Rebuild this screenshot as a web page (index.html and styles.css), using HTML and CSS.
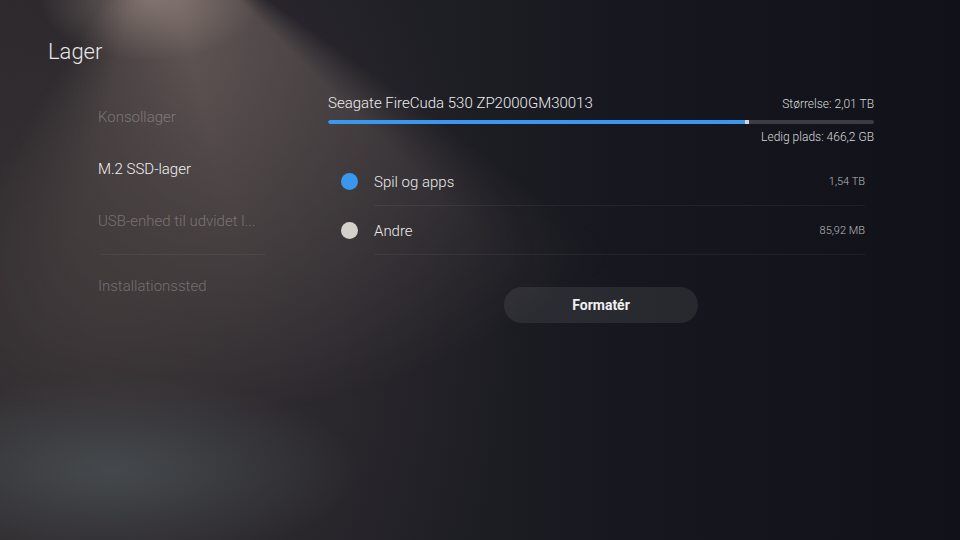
FILE: index.html
```html
<!DOCTYPE html>
<html>
<head>
<meta charset="utf-8">
<title>Lager</title>
<link rel="stylesheet" href="styles.css">
</head>
<body>
<div class="screen">
	<h1 class="title">Lager</h1>
	<div class="layout">
		<nav class="menu">
			<div class="menu-item dim">Konsollager</div>
			<div class="menu-item active">M.2 SSD-lager</div>
			<div class="menu-item dim">USB-enhed til udvidet l...</div>
			<div class="menu-sep"></div>
			<div class="menu-item dim">Installationssted</div>
		</nav>
		<main class="panel">
			<div class="drive-head">
				<span class="drive-name">Seagate FireCuda 530 ZP2000GM30013</span>
				<span class="drive-size">Størrelse: 2,01 TB</span>
			</div>
			<div class="bar">
				<div class="bar-fill" style="width: 76.4%"></div>
				<div class="bar-other"></div>
			</div>
			<div class="free">Ledig plads: 466,2 GB</div>
			<ul class="usage">
				<li class="usage-row">
					<span class="dot blue"></span>
					<span class="usage-label">Spil og apps</span>
					<span class="usage-value">1,54 TB</span>
				</li>
				<li class="usage-row">
					<span class="dot grey"></span>
					<span class="usage-label">Andre</span>
					<span class="usage-value">85,92 MB</span>
				</li>
			</ul>
			<div class="actions">
				<button class="btn">Formatér</button>
			</div>
		</main>
	</div>
</div>
</body>
</html>
```

FILE: styles.css
```css
html, body {
	margin: 0;
	padding: 0;
}
body {
	width: 960px;
	height: 540px;
	overflow: hidden;
	font-family: Roboto, "Noto Sans", sans-serif;
	color: #fff;
	background: #15161e;
}
.screen {
	position: relative;
	width: 960px;
	height: 540px;
	box-sizing: border-box;
	padding: 38px 0 0 48px;
	background:
		radial-gradient(ellipse 110px 60px at 150px 0px, rgba(200,178,165,0.45), rgba(200,178,165,0) 100%),
		radial-gradient(ellipse 250px 95px at 110px 470px, rgba(78,88,92,0.65), rgba(78,88,92,0) 100%),
		radial-gradient(ellipse 420px 480px at 100px 320px, rgba(58,52,54,0.85), rgba(58,52,54,0) 100%),
		linear-gradient(90deg, #29262a 0%, #222128 35%, #17181f 65%, #111219 100%);
}
/* light beam from the top left */
.screen::before {
	content: "";
	position: absolute;
	left: 0;
	top: 0;
	right: 0;
	bottom: 0;
	background: conic-gradient(from 125deg at 155px -80px,
		rgba(152,134,126,0) 0deg,
		rgba(152,134,126,0.45) 9deg,
		rgba(152,134,126,0.56) 40deg,
		rgba(152,134,126,0.34) 70deg,
		rgba(152,134,126,0) 88deg);
	-webkit-mask-image: radial-gradient(ellipse 640px 500px at 155px -80px, #000 12%, rgba(0,0,0,0.5) 55%, transparent 100%);
	mask-image: radial-gradient(ellipse 640px 500px at 155px -80px, #000 12%, rgba(0,0,0,0.5) 55%, transparent 100%);
	pointer-events: none;
}
.title, .layout {
	position: relative;
}
.title {
	margin: 0;
	font-weight: 300;
	font-size: 22px;
	line-height: 28px;
	color: #e8e6e6;
}
.layout {
	display: flex;
	margin-top: 25px;
}
.menu {
	width: 218px;
	padding-left: 50px;
	box-sizing: content-box;
}
.menu-item {
	font-size: 15px;
	font-weight: 300;
	height: 52px;
	line-height: 52px;
	white-space: nowrap;
}
.menu-item.dim {
	color: rgba(255,255,255,0.28);
}
.menu-item.active {
	color: #f2f2f2;
}
.menu-sep {
	height: 1px;
	width: 166px;
	margin: 7px 0 5px 2px;
	background: rgba(255,255,255,0.05);
}
.panel {
	width: 546px;
	margin-left: 12px;
	margin-top: 3px;
}
.drive-head {
	display: flex;
	justify-content: space-between;
	align-items: baseline;
}
.drive-name {
	font-size: 15px;
	font-weight: 300;
	color: #eeeeee;
}
.drive-size {
	font-size: 12px;
	font-weight: 300;
	color: #d8d8d8;
}
.bar {
	display: flex;
	height: 4px;
	margin-top: 8px;
	border-radius: 2px;
	background: #3b3c44;
	overflow: hidden;
}
.bar-fill {
	background: #3a97ee;
	border-radius: 2px 0 0 2px;
}
.bar-other {
	width: 4px;
	background: #d6d4d0;
}
.free {
	text-align: right;
	font-size: 12px;
	font-weight: 300;
	color: #d8d8d8;
	margin-top: 6px;
}
.usage {
	list-style: none;
	margin: 13px 9px 0 0;
	padding: 0;
}
.usage-row {
	display: flex;
	align-items: center;
	height: 49px;
	position: relative;
}
.usage-row::after {
	content: "";
	position: absolute;
	left: 46px;
	right: 0;
	bottom: 0;
	height: 1px;
	background: rgba(255,255,255,0.06);
}
.dot {
	width: 17px;
	height: 17px;
	border-radius: 50%;
	margin-left: 13px;
	margin-right: 16px;
}
.dot.blue {
	background: #3a97ee;
}
.dot.grey {
	background: #d4d1cc;
}
.usage-label {
	flex: 1;
	font-size: 15px;
	font-weight: 300;
	color: #eaeaea;
}
.usage-value {
	font-size: 11px;
	font-weight: 300;
	color: #b8b8b8;
}
.actions {
	display: flex;
	justify-content: center;
	margin-top: 32px;
}
.btn {
	width: 194px;
	height: 36px;
	border: none;
	border-radius: 18px;
	background: rgba(255,255,255,0.08);
	color: #f0f0f0;
	font-family: Roboto, "Noto Sans", sans-serif;
	font-size: 14px;
	font-weight: 700;
}
```
